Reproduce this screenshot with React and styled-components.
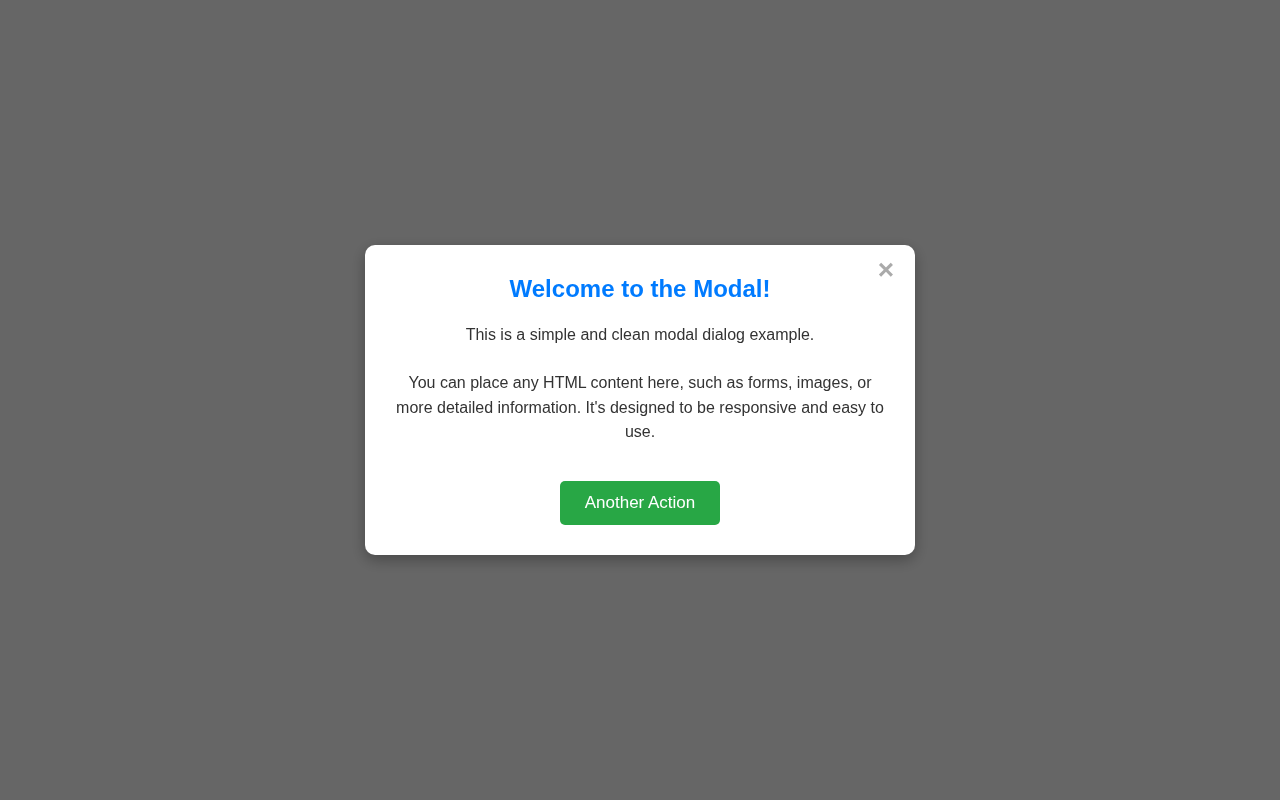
import React from "react";
import styled, { createGlobalStyle } from "styled-components";

const Global = createGlobalStyle`
  html, body { margin: 0; padding: 0; }
  body {
    font-family: "Liberation Sans", Arial, Helvetica, sans-serif;
    background: #ffffff;
  }
`;

const Overlay = styled.div`
  position: fixed;
  inset: 0;
  background: rgba(0, 0, 0, 0.6);
  display: flex;
  align-items: center;
  justify-content: center;
`;

const Dialog = styled.div`
  position: relative;
  box-sizing: border-box;
  width: 550px;
  background: #ffffff;
  border-radius: 10px;
  padding: 30px;
  box-shadow: 0 5px 15px rgba(0, 0, 0, 0.3);
  text-align: center;
`;

const Close = styled.button`
  position: absolute;
  top: 11px;
  right: 21px;
  border: none;
  background: none;
  padding: 0;
  font-family: "Liberation Sans", Arial, sans-serif;
  font-size: 28px;
  font-weight: bold;
  line-height: 1;
  color: #aaaaaa;
  cursor: pointer;
`;

const Title = styled.h2`
  margin: 0 0 20px;
  font-size: 24px;
  font-weight: bold;
  color: #007bff;
`;

const Text = styled.p`
  margin: 0 0 ${(p) => p.$gap || 0}px;
  font-size: 16px;
  line-height: 24.5px;
  color: #333333;
`;

const Actions = styled.div`
  margin-top: 36.5px;
  display: flex;
  justify-content: center;
`;

const Button = styled.button`
  border: none;
  border-radius: 5px;
  background: #28a745;
  color: #ffffff;
  font-family: "Liberation Sans", Arial, sans-serif;
  font-size: 17px;
  line-height: 20px;
  padding: 12px 25px;
  cursor: pointer;
`;

export default function App() {
  return (
    <>
      <Global />
      <Overlay>
        <Dialog>
          <Close aria-label="Close">×</Close>
          <Title>Welcome to the Modal!</Title>
          <Text $gap={23.5}>This is a simple and clean modal dialog example.</Text>
          <Text>
            You can place any HTML content here, such as forms, images, or more
            detailed information. It's designed to be responsive and easy to use.
          </Text>
          <Actions>
            <Button>Another Action</Button>
          </Actions>
        </Dialog>
      </Overlay>
    </>
  );
}
